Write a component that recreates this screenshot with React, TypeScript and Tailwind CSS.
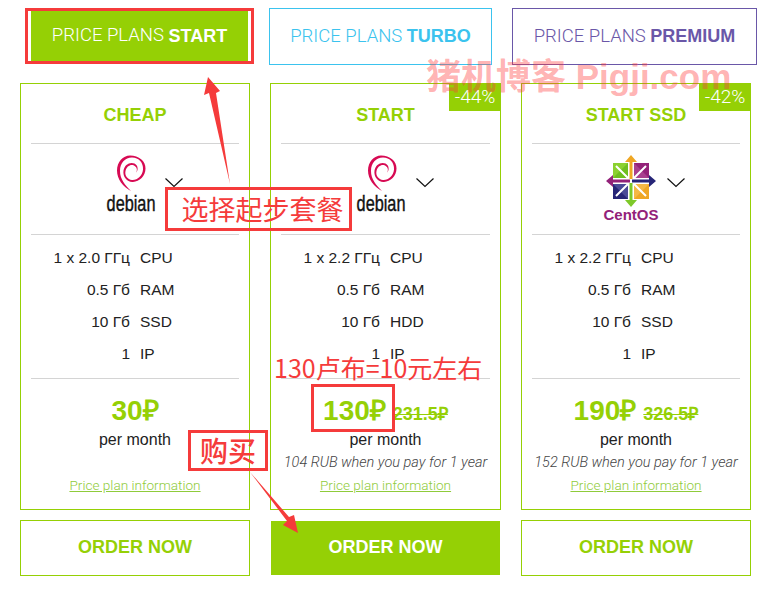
const sans = "font-['Liberation_Sans',Arial,sans-serif]";
const light = "font-['Roboto',sans-serif] font-light";

const plans = [
  {
    name: "CHEAP",
    os: "debian",
    cpu: "1 x 2.0 ГГц",
    disk: "SSD",
    price: "30₽",
    old: "",
    yearly: "",
    active: false,
  },
  {
    name: "START",
    os: "debian",
    cpu: "1 x 2.2 ГГц",
    disk: "HDD",
    price: "130₽",
    old: "231.5₽",
    yearly: "104 RUB when you pay for 1 year",
    discount: "-44%",
    active: true,
  },
  {
    name: "START SSD",
    os: "centos",
    cpu: "1 x 2.2 ГГц",
    disk: "SSD",
    price: "190₽",
    old: "326.5₽",
    yearly: "152 RUB when you pay for 1 year",
    discount: "-42%",
    active: false,
  },
];

function DebianLogo() {
  return (
    <div className="flex flex-col items-center w-[48px] mb-[11px]">
      <svg width="32" height="40" viewBox="0 0 32 40">
        <path
          d="M15 1.5C8 1.5 2 8 2 16.5C2 25 8 33 16 37C10 31 5 25 5 17C5 9 10 3.5 17 3.5C24 3.5 28.5 9 28 15.5C27.5 22 22 26.5 17 26C12.5 25.5 9.5 21.5 10.5 17C11.5 12.5 15.5 10 19 11.5C22 13 23 16.5 20.5 19C23.5 17 23.5 11.5 19.5 9.5C15 7.5 9.5 10.5 8.5 16.5C7.5 23 12.5 28.5 18 28C24.5 27.5 30.5 22 30.5 14.5C30.5 7 24 1.5 15 1.5Z"
          fill="#d70a53"
        />
      </svg>
      <span className={`${sans} text-[22px] leading-[19px] text-[#111] scale-x-[0.74] [-webkit-text-stroke:0.4px_#111]`}>
        debian
      </span>
    </div>
  );
}

function CentosLogo() {
  return (
    <div className="flex flex-col items-center w-[56px]">
      <svg width="51" height="52" viewBox="0 0 51 52">
        <rect x="7" y="8" width="15" height="15" fill="#8bd12f" />
        <rect x="28" y="8" width="15" height="15" fill="#932279" />
        <rect x="7" y="29" width="15" height="15" fill="#262577" />
        <rect x="28" y="29" width="15" height="15" fill="#efa724" />
        <path d="M7 23L22 8V23Z" fill="#6fbf1f" />
        <path d="M43 23L28 8V23Z" fill="#a8408f" />
        <path d="M7 29L22 44V29Z" fill="#4a4a97" />
        <path d="M43 29L28 44V29Z" fill="#f5b845" />
        <path d="M10 11L22 23M40 11L28 23M10 41L22 29M40 41L28 29" stroke="#fff" strokeWidth="2" />
        <path d="M25 0L31 7H26.5V24H23.5V7H19Z" fill="#efa724" />
        <path d="M50 26L43 32V27.5H26V24.5H43V20Z" fill="#262577" />
        <path d="M25 52L19 45H23.5V28H26.5V45H31Z" fill="#7ec92a" />
        <path d="M0 26L7 20V24.5H24V27.5H7V32Z" fill="#932279" />
      </svg>
      <span className={`${sans} text-[15px] leading-[16px] font-bold text-[#932279]`}>CentOS</span>
    </div>
  );
}

function Chevron() {
  return (
    <svg width="18" height="10" viewBox="0 0 18 10" className="shrink-0 mb-[13px]">
      <path d="M0.5 0.5L9 8.5L17.5 0.5" fill="none" stroke="#111" strokeWidth="1.2" />
    </svg>
  );
}

function SpecRow({ value, label }: { value: string; label: string }) {
  return (
    <div className="grid grid-cols-[99px_1fr] gap-x-[10px] h-8 items-center text-[15.5px] text-[#222]">
      <span className="text-right whitespace-nowrap">{value}</span>
      <span>{label}</span>
    </div>
  );
}

function PlanCard({ plan, wide }: { plan: (typeof plans)[number]; wide: boolean }) {
  return (
    <div className={`flex flex-col gap-[10px] ${wide ? "w-[231px]" : "w-[230px]"}`}>
      <div className="relative h-[427px] border border-[#95d005]">
        {plan.discount && (
          <div className={`${light} absolute -top-px -right-px w-[52px] h-[28px] bg-[#95d005] text-white text-[19px] leading-[28px] text-center`}>
            {plan.discount}
          </div>
        )}
        <div className="mx-[10px] h-[60px] pt-[3px] border-b border-[#d4d4d4] flex items-center justify-center text-[18px] font-bold text-[#95d005]">
          {plan.name}
        </div>
        <div
          className={`mx-[10px] h-[91px] border-b border-[#d4d4d4] flex items-center justify-center ${
            plan.os === "debian" ? "pl-[20px] gap-[10px]" : "pl-[16px] gap-[8px]"
          }`}
        >
          {plan.os === "debian" ? <DebianLogo /> : <CentosLogo />}
          <Chevron />
        </div>
        <div className="mx-[10px] h-[144px] border-b border-[#d4d4d4] pt-[7px]">
          <SpecRow value={plan.cpu} label="CPU" />
          <SpecRow value="0.5 Гб" label="RAM" />
          <SpecRow value="10 Гб" label={plan.disk} />
          <SpecRow value="1" label="IP" />
        </div>
        <div className="flex flex-col items-center pt-4">
          <div className="h-8 flex items-baseline justify-center gap-[7px] text-[#95d005] font-bold whitespace-nowrap">
            <span className="text-[28px] leading-8">{plan.price}</span>
            {plan.old && <span className="text-[18px] line-through">{plan.old}</span>}
          </div>
          <div className="mt-[3px] h-5 text-[16px] leading-5 text-[#222]">per month</div>
          <div className={`${light} mt-[2px] h-[22px] text-[14.5px] leading-[22px] italic text-[#444] whitespace-nowrap`}>{plan.yearly}</div>
          <a className={`${light} h-[22px] text-[13.6px] leading-[22px] text-[#8fcb3a] underline`}>Price plan information</a>
        </div>
      </div>
      <div
        className={`h-14 pb-px flex items-center justify-center text-[18px] font-bold border ${
          plan.active ? "bg-[#95d005] text-white border-white" : "text-[#95d005] border-[#95d005]"
        }`}
      >
        ORDER NOW
      </div>
    </div>
  );
}

function Annotations() {
  const boxText = "font-['Noto_Sans_CJK_SC',sans-serif] text-[#f53b3b]";
  return (
    <>
      {/* red notes pasted on top of the page */}
      <svg width="780" height="595" viewBox="0 0 780 595" className="absolute inset-0 pointer-events-none">
        <path d="M208 77L220 91L216 93L230 184L209 93L204 95Z" fill="#f53b3b" />
        <path d="M250 472L289 517L294 515L298 533L283 525L287 521Z" fill="#f53b3b" />
      </svg>
      <div className="absolute left-[25px] top-2 w-[229px] h-14 border-[3px] border-[#f53b3b]" />
      <div className={`${boxText} absolute left-[165px] top-[187px] w-[187px] h-[44px] border-[3px] border-[#f53b3b] text-[27px] leading-[38px] text-center pl-[8px] whitespace-nowrap`}>
        选择起步套餐
      </div>
      <div className={`${boxText} absolute left-[188px] top-[430px] w-[80px] h-[41px] border-[3px] border-[#f53b3b] text-[28px] leading-[34px] text-center font-medium`}>
        购买
      </div>
      <div className="absolute left-[311px] top-[384px] w-[84px] h-[48px] border-[3px] border-[#f53b3b]" />
      <div className={`${boxText} absolute left-[274px] top-[350px] text-[25px] leading-[34px] whitespace-nowrap`}>
        130卢布=10元左右
      </div>
      <div className="absolute left-[426px] top-[55px] text-[35px] leading-[44px] font-bold whitespace-nowrap text-[#ff3c3c]/40 font-['Liberation_Sans','Noto_Sans_CJK_SC',sans-serif]">
        猪机博客 Pigji.com
      </div>
    </>
  );
}

export default function App() {
  return (
    <div className={`${sans} relative w-[780px] h-[595px] overflow-hidden bg-white`}>
      <div className="flex pt-2 pl-[25px] h-[83px]">
        <div className="w-[229px] h-14 p-[3px] mr-[15px]">
          <div className="h-full mx-[3px] bg-[#95d005] flex items-center justify-center text-[18px] text-white whitespace-nowrap">
            <span className={`${light} text-[18.5px]`}>PRICE PLANS&nbsp;</span>
            <b>START</b>
          </div>
        </div>
        <div className="w-[223px] h-[57px] mr-5 border border-[#3bc3ee] flex items-center justify-center text-[18px] text-[#3bc3ee] whitespace-nowrap">
          <span className={`${light} text-[18.5px]`}>PRICE PLANS&nbsp;</span>
          <b>TURBO</b>
        </div>
        <div className="w-[245px] h-[57px] border border-[#6a57a8] flex items-center justify-center text-[18px] text-[#6a57a8] whitespace-nowrap">
          <span className={`${light} text-[18.5px]`}>PRICE PLANS&nbsp;</span>
          <b>PREMIUM</b>
        </div>
      </div>
      <div className="flex gap-5 pl-5">
        {plans.map((plan) => (
          <PlanCard key={plan.name} plan={plan} wide={plan.name === "START"} />
        ))}
      </div>
      <Annotations />
    </div>
  );
}
